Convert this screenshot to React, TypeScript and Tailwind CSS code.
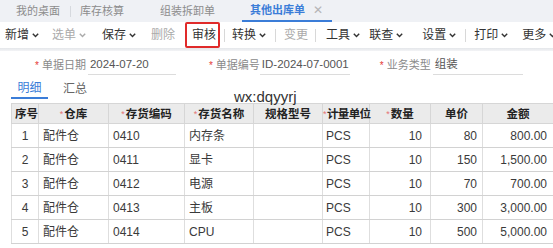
import React from 'react';

const Chevron = () => (
  <svg width="7" height="5" viewBox="0 0 7 5" className="ml-[3px] mt-[1px] shrink-0">
    <path d="M0.8 0.8 L3.5 3.6 L6.2 0.8" fill="none" stroke="currentColor" strokeWidth="1.4" />
  </svg>
);

const tools = [
  { t: '新增', c: true, cls: 'ml-[5px] text-[#333]' },
  { t: '选单', c: true, cls: 'ml-[13px] text-[#aaa]' },
  { t: '保存', c: true, cls: 'ml-[16px] text-[#333]' },
  { t: '删除', c: false, cls: 'ml-[15px] text-[#aaa]' },
  { t: '审核', c: false, cls: 'ml-[17px] text-[#333]', box: true },
  { div: true, cls: 'ml-[8px]' },
  { t: '转换', c: true, cls: 'ml-[7px] text-[#333]' },
  { div: true, cls: 'ml-[9px]' },
  { t: '变更', c: false, cls: 'ml-[8px] text-[#aaa]' },
  { div: true, cls: 'ml-[7px]' },
  { t: '工具', c: true, cls: 'ml-[10px] text-[#333]' },
  { t: '联查', c: true, cls: 'ml-[9px] text-[#333]' },
  { t: '设置', c: true, cls: 'ml-[19px] text-[#333]' },
  { div: true, cls: 'ml-[9px]' },
  { t: '打印', c: true, cls: 'ml-[8px] text-[#333]' },
  { t: '更多', c: true, cls: 'ml-[14px] text-[#333]' },
];

const rows = [
  ['1', '配件仓', '0410', '内存条', '', 'PCS', '10', '80', '800.00'],
  ['2', '配件仓', '0411', '显卡', '', 'PCS', '10', '150', '1,500.00'],
  ['3', '配件仓', '0412', '电源', '', 'PCS', '10', '70', '700.00'],
  ['4', '配件仓', '0413', '主板', '', 'PCS', '10', '300', '3,000.00'],
  ['5', '配件仓', '0414', 'CPU', '', 'PCS', '10', '500', '5,000.00'],
];

const heads = [
  { t: '序号', req: false, cls: 'text-left pl-[3px]' },
  { t: '仓库', req: true, cls: 'text-center' },
  { t: '存货编码', req: true, cls: 'text-center' },
  { t: '存货名称', req: true, cls: 'text-center' },
  { t: '规格型号', req: false, cls: 'text-center' },
  { t: '计量单位', req: true, cls: 'text-center tracking-[-0.6px]' },
  { t: '数量', req: true, cls: 'text-center' },
  { t: '单价', req: false, cls: 'text-center' },
  { t: '金额', req: false, cls: 'text-center' },
];

const colW = ['w-[27px]', 'w-[70px]', 'w-[76px]', 'w-[69px]', 'w-[69px]', 'w-[47px]', 'w-[61px]', 'w-[52px]', 'w-[71px]'];
const cellCls = [
  'text-center',
  'text-left pl-[4px]',
  'text-left pl-[4px]',
  'text-left pl-[4px]',
  'text-left pl-[4px]',
  'text-left pl-[3px]',
  'text-right pr-[8px]',
  'text-right pr-[5px]',
  'text-right pr-[6px]',
];

function Field({ label, value, cls, lw, iw }: { label: string; value: string; cls: string; lw: string; iw: string }) {
  return (
    <div className={`flex items-center shrink-0 ${cls}`}>
      <span className="text-[#e53935] text-[10px] mr-[3px]">*</span>
      <span className={`text-[11px] text-[#8a8a8a] shrink-0 ${lw}`}>{label}</span>
      <div className={`h-[20px] border-b border-[#dcdcdc] flex items-center pl-[2px] text-[11.5px] text-[#555] shrink-0 ${iw}`}>{value}</div>
    </div>
  );
}

export default function App() {
  return (
    <div className="relative w-[553px] h-[248px] overflow-hidden bg-white whitespace-nowrap font-['Liberation_Sans','Noto_Sans_CJK_SC',sans-serif]">
      {/* tab bar */}
      <div className="h-[22px] bg-[#eff1f5] flex items-stretch text-[11px] text-[#8c8c8c]">
        <div className="flex items-center shrink-0 ml-[16px] w-[44px]">我的桌面</div>
        <div className="flex items-center shrink-0 ml-[10px]"><div className="w-px h-[11px] bg-[#d6d9de]" /></div>
        <div className="flex items-center shrink-0 ml-[9px] w-[44px]">库存核算</div>
        <div className="flex items-center shrink-0 ml-[36px] w-[55px]">组装拆卸单</div>
        <div className="ml-[27px] w-[90px] shrink-0 flex items-center border-b-2 border-[#3b7dd8] pl-[8px]">
          <span className="text-[#3b7dd8] font-bold">其他出库单</span>
          <span className="ml-[8px] text-[#b5b5b5] text-[12px]">✕</span>
        </div>
      </div>
      {/* toolbar */}
      <div className="h-[26px] flex items-stretch text-[12px] bg-white">
        {tools.map((it, i) =>
          it.div ? (
            <div key={i} className={`flex items-center shrink-0 ${it.cls}`}>
              <div className="w-px h-[13px] bg-[#d8d8d8]" />
            </div>
          ) : (
            <div key={i} className={`relative flex items-center shrink-0 ${it.cls}`}>
              <span>{it.t}</span>
              {it.c && <Chevron />}
              {it.box && <span className="absolute -left-[7px] -right-[4px] top-0 bottom-0 border-2 border-[#e02a2a] rounded-[2px]" />}
            </div>
          )
        )}
      </div>
      <div className="h-[3px] bg-gradient-to-b from-[#e4e6ea] to-[#f3f4f6]" />
      {/* form */}
      <div className="h-[27px] flex items-start pt-[4px]">
        <Field label="单据日期" value="2024-07-20" cls="ml-[35px]" lw="w-[46px]" iw="w-[88px]" />
        <Field label="单据编号" value="ID-2024-07-0001" cls="ml-[33px]" lw="w-[44px]" iw="w-[90px]" />
        <Field label="业务类型" value="组装" cls="ml-[30px]" lw="w-[46px]" iw="w-[90px]" />
      </div>
      {/* detail tabs */}
      <div className="h-[21px] flex items-stretch ml-[11px] text-[12px]">
        <div className="w-[37px] shrink-0 flex items-center justify-center text-[#3b7dd8] border-b-2 border-[#3b7dd8]">明细</div>
        <div className="ml-[15px] shrink-0 flex items-center text-[#666]">汇总</div>
      </div>
      {/* table */}
      <div className="mt-[4px] ml-[11px]">
        <table className="table-fixed w-[542px] border-collapse text-[12px] text-[#3a3a3a]">
          <colgroup>
            {colW.map((w, i) => (
              <col key={i} className={w} />
            ))}
          </colgroup>
          <thead>
            <tr className="h-[20px] bg-[#ebebeb]">
              {heads.map((h, i) => (
                <th key={i} className={`border border-[#d6d6d6] font-bold text-[11.5px] text-[#222] p-0 leading-[18px] ${h.cls}`}>
                  {h.req && <span className="text-[#e57373] font-normal text-[9px] mr-[1px] align-top">*</span>}
                  {h.t}
                </th>
              ))}
            </tr>
          </thead>
          <tbody>
            {rows.map((r, ri) => (
              <tr key={ri} className="h-[24px]">
                {r.map((c, ci) => (
                  <td key={ci} className={`border border-[#dedede] border-b-[#d2d2d2] p-0 leading-[22px] ${cellCls[ci]}`}>
                    {c}
                  </td>
                ))}
              </tr>
            ))}
          </tbody>
        </table>
      </div>
      {/* watermark */}
      <div className="absolute left-[234px] top-[89px] text-[15px] text-[#333] leading-none">wx:dqyyrj</div>
    </div>
  );
}
